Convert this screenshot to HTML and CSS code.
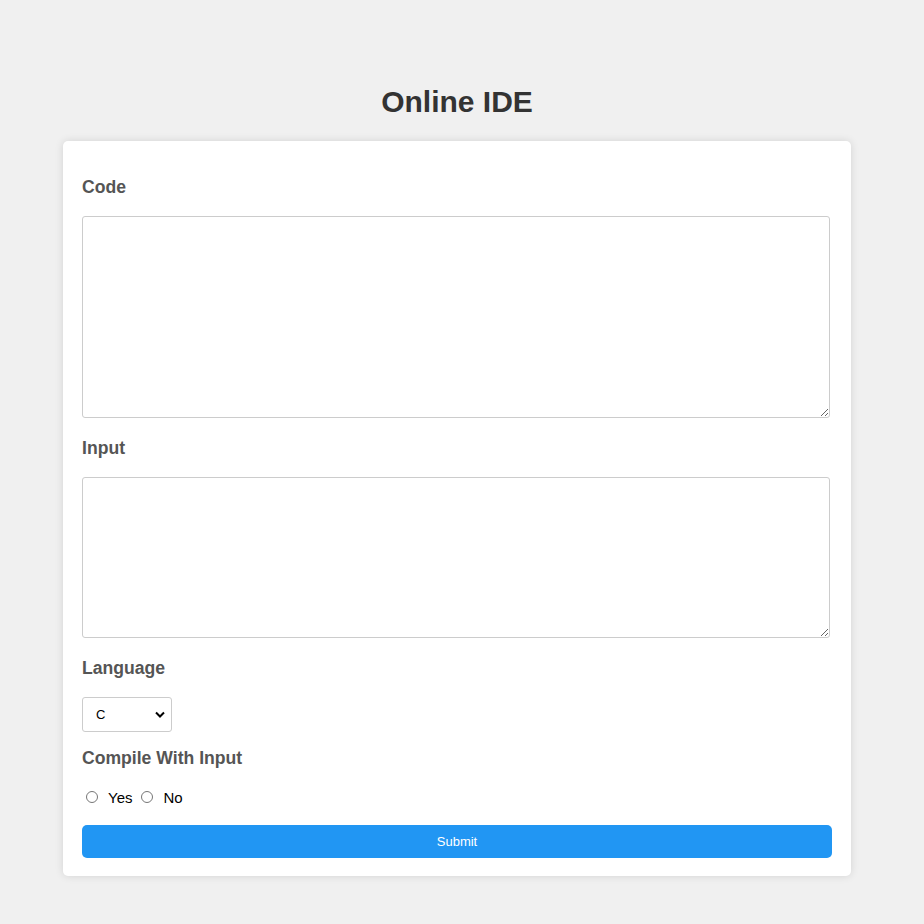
FILE: index.html
```html
<!DOCTYPE html>
<html>
<head>
<meta charset="utf-8">
<title>Online IDE</title>
<link rel="stylesheet" href="styles.css">
</head>
<body>
<div class="page">
  <h1 class="title">Online IDE</h1>
  <form class="card">
    <label class="field-label" for="code">Code</label>
    <textarea id="code" class="code-area"></textarea>
    <label class="field-label" for="input">Input</label>
    <textarea id="input" class="input-area"></textarea>
    <label class="field-label" for="lang">Language</label>
    <div class="select-wrap">
      <select id="lang" class="lang-select">
        <option>C</option>
        <option>C++</option>
        <option>Java</option>
        <option>Python</option>
      </select>
      <svg class="chevron" width="10" height="7" viewBox="0 0 10 7"><path d="M1 1.5 L5 5.5 L9 1.5" fill="none" stroke="#000" stroke-width="2"/></svg>
    </div>
    <div class="field-label compile-label">Compile With Input</div>
    <div class="radios">
      <label class="radio"><input type="radio" name="withinput" value="yes"> Yes</label>
      <label class="radio"><input type="radio" name="withinput" value="no"> No</label>
    </div>
    <button type="button" class="submit">Submit</button>
  </form>
</div>
</body>
</html>
```

FILE: styles.css
```css
html, body {
  margin: 0;
  padding: 0;
  background: #f0f0f0;
  font-family: "Liberation Sans", Arial, sans-serif;
}

.page {
  width: 788px;
  margin-left: 63px;
  padding-top: 83px;
  padding-bottom: 48px;
}

.title {
  margin: 0 0 21px;
  text-align: center;
  font-size: 30px;
  line-height: 37px;
  font-weight: bold;
  color: #333;
}

.card {
  display: flex;
  flex-direction: column;
  align-items: flex-start;
  background: #fff;
  border-radius: 5px;
  box-shadow: 0 0 8px rgba(0, 0, 0, 0.12);
  padding: 36px 19px 18px;
}

.field-label {
  display: block;
  font-size: 17.6px;
  line-height: 21px;
  font-weight: bold;
  color: #555;
  margin: 0 0 18px;
}

.code-area,
.input-area {
  box-sizing: border-box;
  width: 748px;
  border: 1px solid #ccc;
  border-radius: 3px;
  margin: 0 0 20px;
  padding: 8px;
  font-family: "Liberation Mono", monospace;
  font-size: 13px;
  resize: both;
}

.code-area {
  height: 202px;
}

.input-area {
  height: 161px;
}

.select-wrap {
  position: relative;
  margin: 0 0 16px;
}

.lang-select {
  display: block;
  box-sizing: border-box;
  width: 90px;
  height: 35px;
  padding: 0 6px 0 13px;
  border: 1px solid #ccc;
  border-radius: 3px;
  background: #fff;
  font-family: "Liberation Sans", Arial, sans-serif;
  font-size: 13px;
  color: #000;
  appearance: none;
  -webkit-appearance: none;
}

.chevron {
  position: absolute;
  right: 7px;
  top: 14px;
  pointer-events: none;
}

.compile-label {
  margin-bottom: 18px;
}

.radios {
  display: flex;
  align-items: center;
  height: 20px;
  margin: 0 0 18px 4px;
  font-size: 15px;
  color: #000;
}

.radio {
  display: flex;
  align-items: center;
  margin-right: 9px;
}

.radio input {
  width: 12px;
  height: 12px;
  margin: 0 10px 0 0;
}

.submit {
  width: 750px;
  height: 33px;
  border: none;
  border-radius: 5px;
  background: #2196f3;
  color: #fff;
  font-family: "Liberation Sans", Arial, sans-serif;
  font-size: 13px;
  cursor: pointer;
}
```
